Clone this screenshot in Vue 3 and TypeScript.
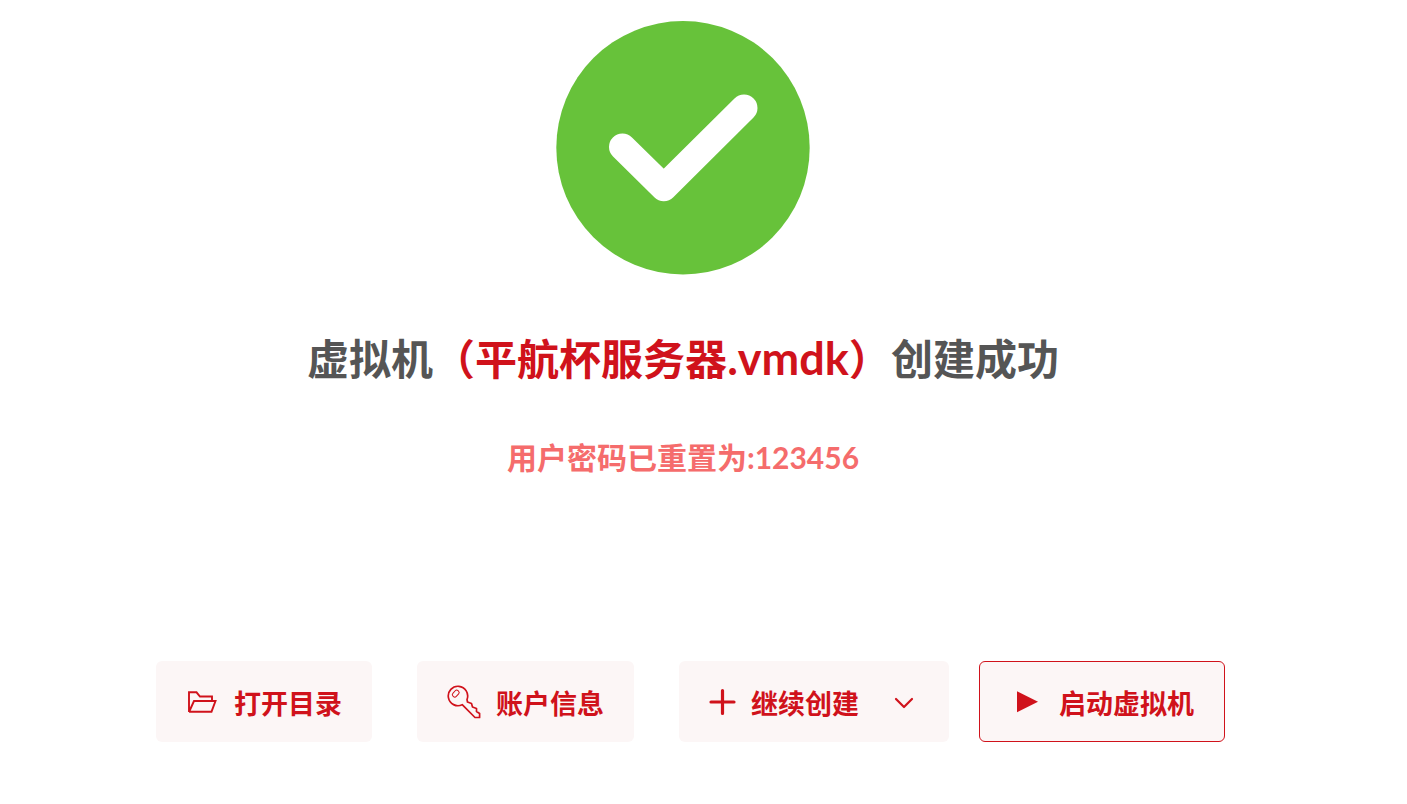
<script setup lang="ts">
const fileName: string = '平航杯服务器'
const extension: string = '.vmdk'
const password: string = '123456'
</script>

<template>
  <main class="result">
    <svg class="status" viewBox="0 0 254 254" role="img" aria-label="成功">
      <circle cx="127" cy="126.700" r="126.700" fill="#67c23a" />
      <path d="M66.500 126 L107.800 166.700 L188 87" fill="none" stroke="#fff" stroke-width="27" stroke-linecap="round" stroke-linejoin="round" />
    </svg>
    <h1 class="title">虚拟机<span class="file">（{{ fileName }}<span class="extension">{{ extension }}</span>）</span>创建成功</h1>
    <p class="notice">用户密码已重置为:{{ password }}</p>
    <div class="actions">
      <button type="button" class="action">
        <svg class="icon" width="33" height="34" viewBox="0 0 33 34" fill="none" stroke="currentColor" stroke-width="1.900">
          <path d="M3 27 V7.300 H10.500 L14 11.500 H26 V16 M3 27 L8 16 H29.500 L25.500 26.700 H3" />
        </svg>
        <span class="label">打开目录</span>
      </button>
      <button type="button" class="action">
        <svg class="icon" width="34" height="34" viewBox="0 0 34 34" fill="none" stroke="currentColor" stroke-width="1.700" stroke-linejoin="round">
          <path d="M15.200 19.700 A9.700 9.700 0 1 1 20 14.500 L20.500 17 L24.500 18.500 L25.500 22 L29.500 23.500 L29.500 26.500 L32.600 28.500 V32.500 H28 Z" />
          <rect x="5" y="6.300" width="7.500" height="4.600" rx="2" stroke-width="1" transform="rotate(-48 8.750 8.600)" />
        </svg>
        <span class="label">账户信息</span>
      </button>
      <button type="button" class="action" aria-haspopup="menu">
        <svg class="icon" width="27" height="34" viewBox="0 0 27 34" fill="none" stroke="currentColor" stroke-width="3.200" stroke-linecap="round">
          <path d="M2 17 H25 M13.500 5.500 V28.500" />
        </svg>
        <span class="label">继续创建</span>
        <svg class="icon arrow" width="30" height="34" viewBox="0 0 30 34" fill="none" stroke="currentColor" stroke-width="2.200" stroke-linecap="round" stroke-linejoin="round">
          <path d="M7 14 L15 22 L23 14" />
        </svg>
      </button>
      <button type="button" class="action start">
        <svg class="icon" width="34" height="34" viewBox="0 0 34 34" fill="currentColor">
          <path d="M7 6.300 L28 16.700 L7 27.300 Z" />
        </svg>
        <span class="label">启动虚拟机</span>
      </button>
    </div>
  </main>
</template>

<style>
body {
  margin: 0;
  background: #fff;
}
</style>

<style scoped>
.result {
  display: flex;
  flex-direction: column;
  align-items: center;
  padding: 21px 41px 60px 0;
  font-family: Lato, "Noto Sans CJK SC", sans-serif;
}
.status {
  width: 254px;
  height: 254px;
}
.title {
  margin: 54px 0 0;
  font-size: 42px;
  line-height: 60px;
  font-weight: 700;
  color: #555;
}
.file {
  color: #d0121b;
}
.extension {
  font-size: 45px;
  line-height: 1;
}
.notice {
  margin: 47px 0 0;
  font-size: 30px;
  line-height: 42px;
  font-weight: 700;
  color: #f56c6c;
}
.actions {
  display: flex;
  margin: 183px 0 0 15px;
}
.action {
  display: flex;
  align-items: center;
  gap: 15px;
  height: 81px;
  margin: 0 45px 0 0;
  padding: 0 29px;
  border: 1px solid transparent;
  border-radius: 6px;
  background: #fcf6f6;
  color: #d0121b;
  font-family: inherit;
  font-size: 27px;
  line-height: 40px;
  font-weight: 700;
  white-space: nowrap;
  cursor: pointer;
}
.action:nth-child(3) {
  margin-right: 30px;
}
.start {
  margin-right: 0;
  padding: 0 30px;
  border-color: #d0121b;
}
.label {
  padding-top: 4px;
}
.icon {
  flex: none;
}
.arrow {
  margin-left: 15px;
}
</style>
